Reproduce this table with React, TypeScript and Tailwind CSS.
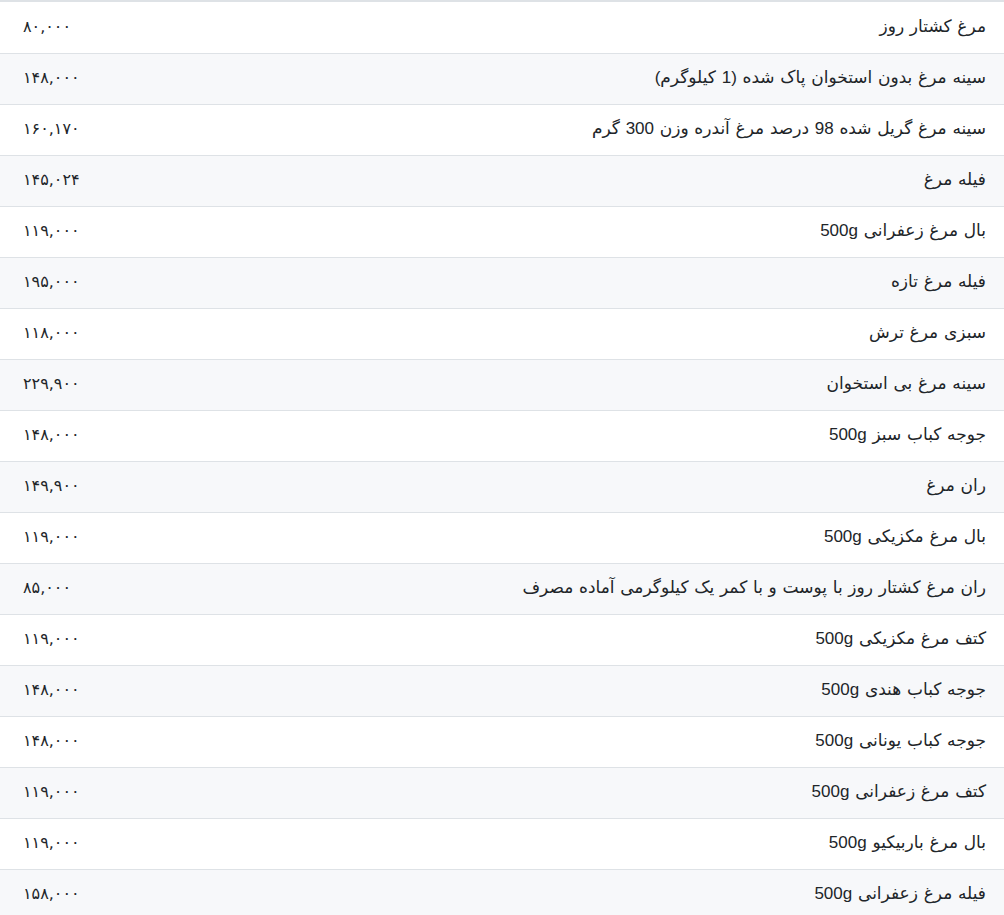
import React from "react";

const rows: [string, string][] = [
  ["مرغ کشتار روز", "۸۰,۰۰۰"],
  ["سینه مرغ بدون استخوان پاک شده (1 کیلوگرم)", "۱۴۸,۰۰۰"],
  ["سینه مرغ گریل شده 98 درصد مرغ آندره وزن 300 گرم", "۱۶۰,۱۷۰"],
  ["فیله مرغ", "۱۴۵,۰۲۴"],
  ["بال مرغ زعفرانی 500g", "۱۱۹,۰۰۰"],
  ["فیله مرغ تازه", "۱۹۵,۰۰۰"],
  ["سبزی مرغ ترش", "۱۱۸,۰۰۰"],
  ["سینه مرغ بی استخوان", "۲۲۹,۹۰۰"],
  ["جوجه کباب سبز 500g", "۱۴۸,۰۰۰"],
  ["ران مرغ", "۱۴۹,۹۰۰"],
  ["بال مرغ مکزیکی 500g", "۱۱۹,۰۰۰"],
  ["ران مرغ کشتار روز با پوست و با کمر یک کیلوگرمی آماده مصرف", "۸۵,۰۰۰"],
  ["کتف مرغ مکزیکی 500g", "۱۱۹,۰۰۰"],
  ["جوجه کباب هندی 500g", "۱۴۸,۰۰۰"],
  ["جوجه کباب یونانی 500g", "۱۴۸,۰۰۰"],
  ["کتف مرغ زعفرانی 500g", "۱۱۹,۰۰۰"],
  ["بال مرغ باربیکیو 500g", "۱۱۹,۰۰۰"],
  ["فیله مرغ زعفرانی 500g", "۱۵۸,۰۰۰"],
];

export default function App() {
  return (
    <div
      dir="rtl"
      className="w-[1004px] bg-white text-[#212529] border-t-2 border-[#dee2e6]"
      style={{ fontFamily: '"Liberation Sans", "DejaVu Sans", sans-serif' }}
    >
      {rows.map(([name, price], i) => (
        <div
          key={i}
          className={`flex items-center justify-between h-[51px] pr-[18px] pl-[23px] pb-[2px] ${
            i > 0 ? "border-t border-[#dee2e6]" : ""
          } ${i % 2 === 1 ? "bg-[#f7f8fa]" : "bg-white"}`}
        >
          <span className="text-[17px] [word-spacing:1px]">{name}</span>
          <span className="text-[16px]" style={{ fontFamily: '"DejaVu Sans", sans-serif' }}>
            {price}
          </span>
        </div>
      ))}
    </div>
  );
}
